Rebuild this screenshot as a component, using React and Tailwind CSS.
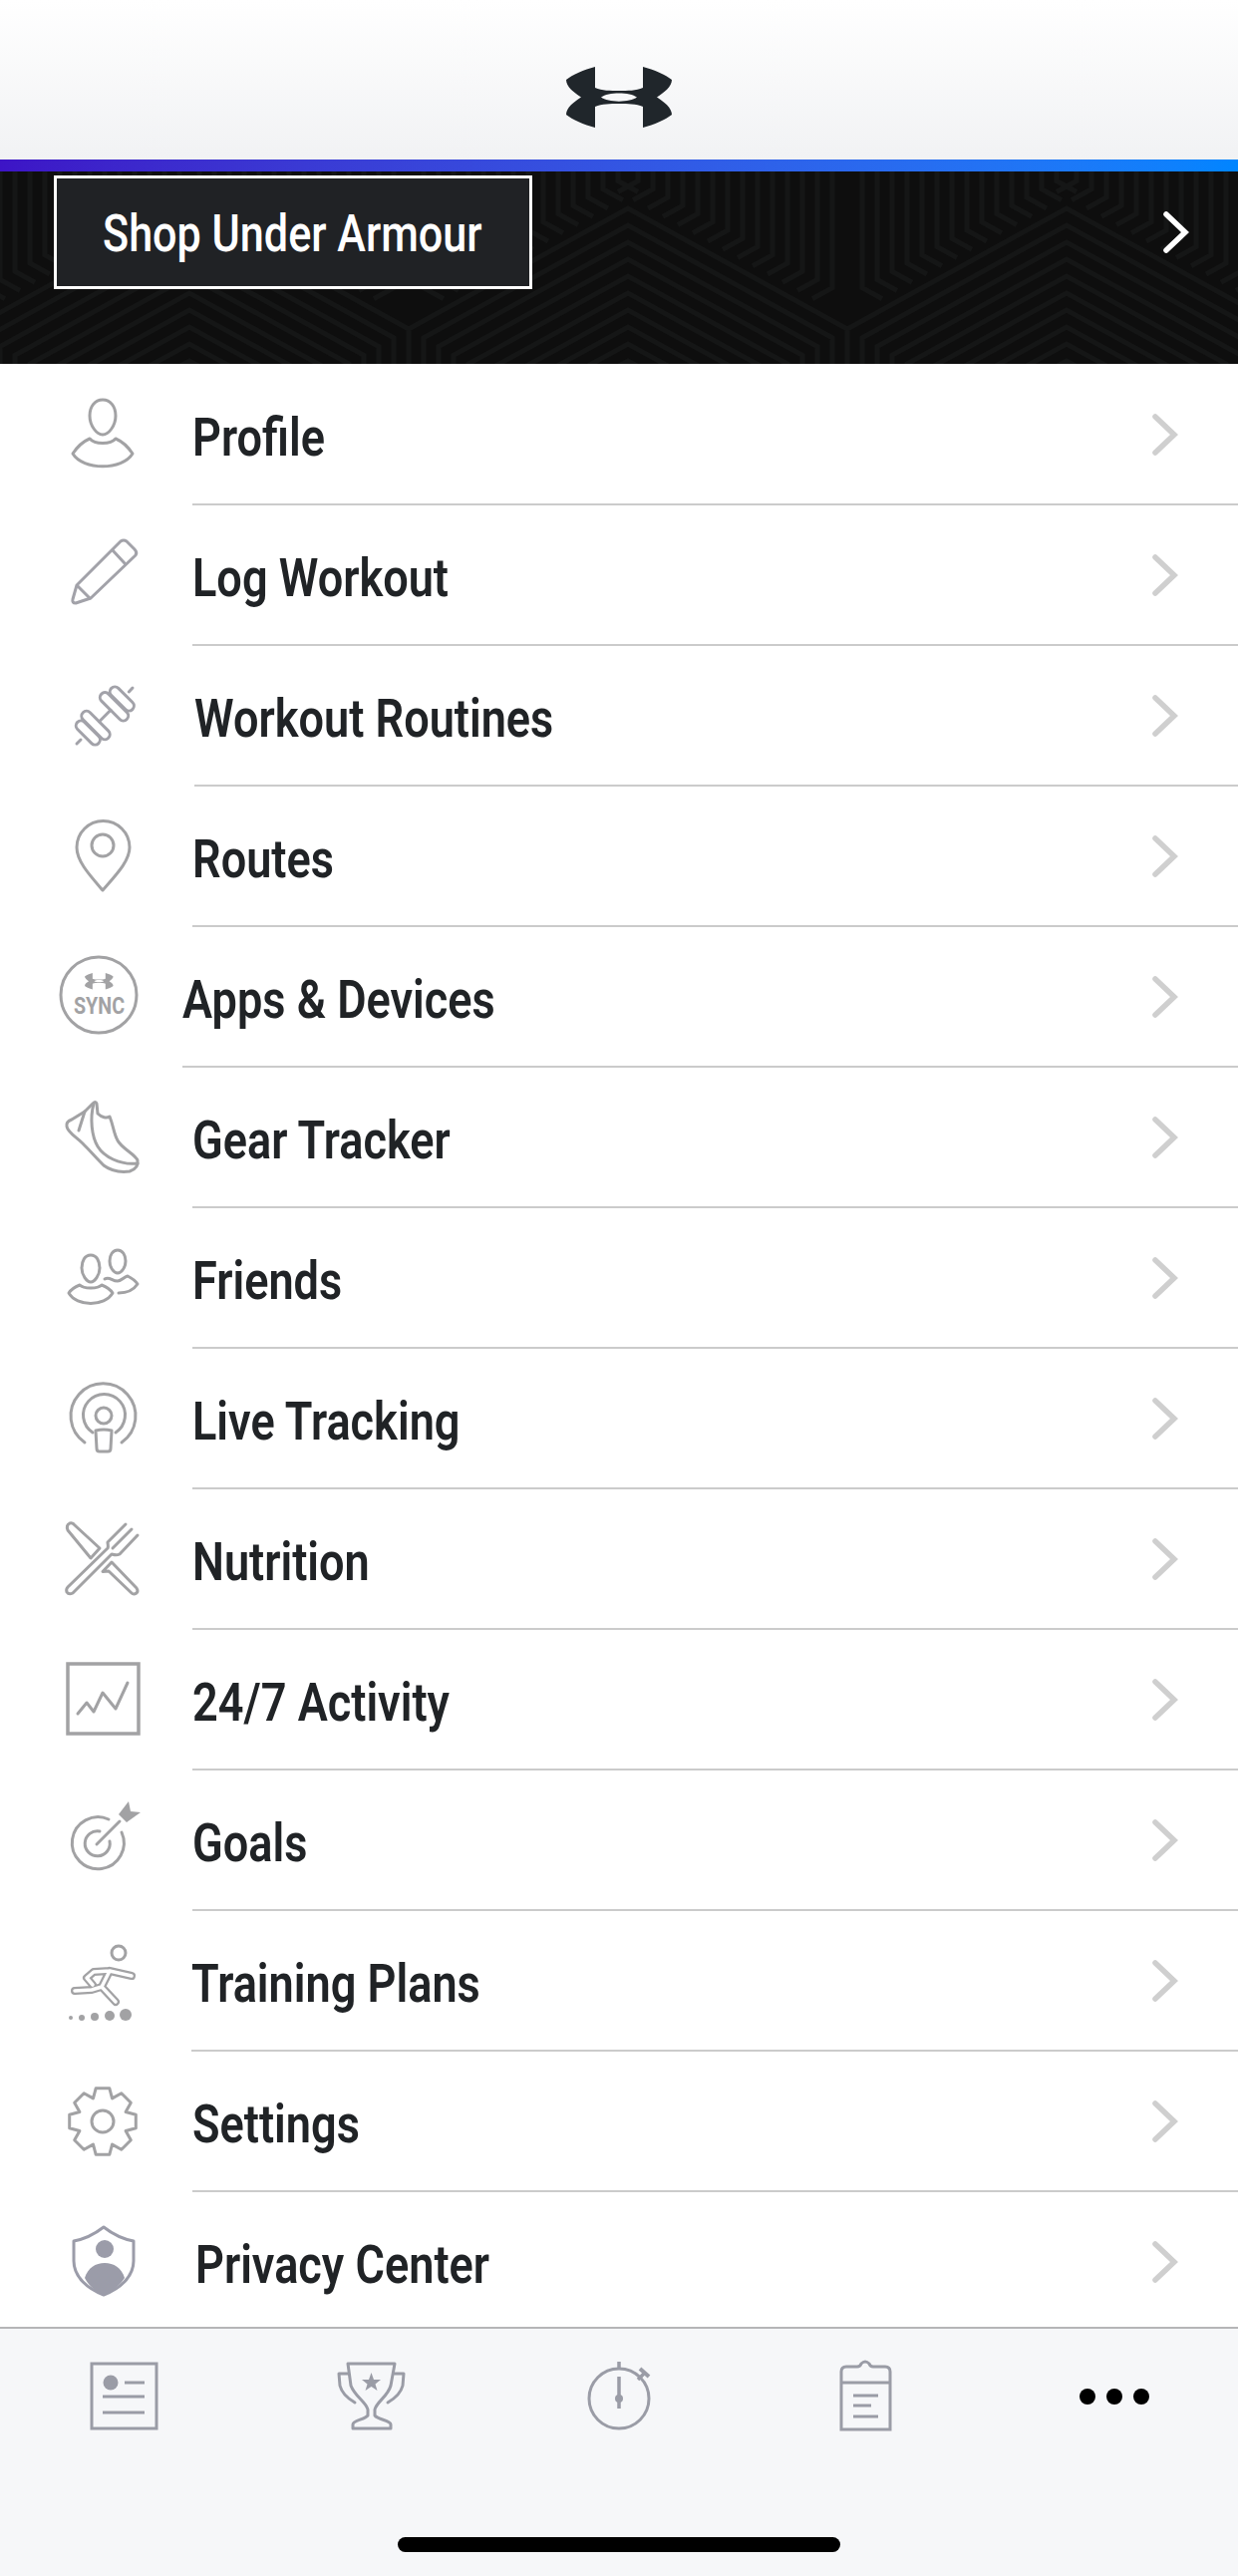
import { useMemo } from 'react';

// Under Armour mark, shared by the header and the sync badge
const UA_PATH =
  'M29 0C18 3 6 8 0 13C0 20 8 26 15 30.5C8 35 0 41 0 48C6 53 18 58 29 61L29 40C36 37 44 37 53 37C62 37 70 37 77 40L77 61C88 58 100 53 106 48C106 41 98 35 91 30.5C98 26 106 20 106 13C100 8 88 3 77 0L77 21C70 24 62 24 53 24C44 24 36 24 29 21ZM35 30.5C42 25 64 25 71 30.5C64 36 42 36 35 30.5Z';

function Glyph({ children, color = '#a2a2a4', width = 3 }) {
  return (
    <svg
      viewBox="0 0 100 100"
      className="w-[100px] h-[100px] shrink-0"
      fill="none"
      stroke={color}
      strokeWidth={width}
      strokeLinecap="round"
      strokeLinejoin="round"
    >
      {children}
    </svg>
  );
}

const ProfileIcon = () => (
  <Glyph>
    <path d="M53 16C45 16 40 23 40 32C40 42 47 51 53 51C59 51 66 42 66 32C66 23 61 16 53 16Z" />
    <path d="M40 55C45 61 61 61 66 55C73 58 79 64 83 70C73 87 33 87 23 70C27 64 33 58 40 55Z" />
  </Glyph>
);

const PencilIcon = () => (
  <Glyph color="#a2a2a9">
    <path d="M27 61L71 17Q74 15 77 17L85 25Q88 28 86 31L41 74L26 79Q22 79 23 75Z" />
    <path d="M28 62L40 74M63 26L75 39" />
  </Glyph>
);

const DumbbellIcon = () => (
  <Glyph color="#a2a2a9">
    <path d="M49.6 56.7L61 45.3M79.3 27L83 23M31 75L27 79" />
    <rect x="46.5" y="36.8" width="36" height="10" rx="5" transform="rotate(45 64.5 41.8)" />
    <rect x="57.3" y="29" width="30" height="10" rx="5" transform="rotate(45 72.3 34)" />
    <rect x="28" y="55.5" width="36" height="10" rx="5" transform="rotate(45 46 60.5)" />
    <rect x="23.3" y="63" width="30" height="10" rx="5" transform="rotate(45 38.3 68)" />
  </Glyph>
);

const PinIcon = () => (
  <Glyph>
    <path d="M53 85C40 70 27 56 27 42A26.5 26.5 0 0 1 80 42C80 56 66 70 53 85Z" />
    <circle cx="53" cy="40" r="11" />
  </Glyph>
);

const SyncIcon = () => (
  <Glyph>
    <circle cx="49" cy="49" r="38" />
    <path d={UA_PATH} transform="translate(35 27) scale(0.27)" fill="#a2a2a4" fillRule="evenodd" stroke="none" />
    <text
      x="24"
      y="68"
      textLength="51"
      lengthAdjust="spacingAndGlyphs"
      fill="#a2a2a4"
      stroke="none"
      className="font-['Roboto',sans-serif] font-bold text-[23px]"
    >
      SYNC
    </text>
  </Glyph>
);

const ShoeIcon = () => (
  <Glyph>
    <path d="M17 40Q16 35 22 33L35 25L43 17Q46 14 47 17L48 27C52 31 57 32 60 30C64 40 64 47 68 54C72 62 86 68 88 74C89 80 86 83 80 85C72 86 62 85 54 79C46 71 40 64 33 57C26 50 18 46 17 40Z" />
    <path d="M35 25L29 44M44 17C40 32 42 50 48 60C54 70 70 79 88 77" />
  </Glyph>
);

const FriendsIcon = () => (
  <Glyph>
    <path d="M41 28C35 28 32 34 32 41C32 48 37 55 41 55C45 55 50 48 50 41C50 34 47 28 41 28Z" />
    <path d="M30 58C34 62 48 62 52 58C57 60 61 63 63 66C55 80 27 80 19 66C21 63 25 60 30 58Z" />
    <path d="M68 23C63 23 60 28 60 34C60 40 64 46 68 46C72 46 76 40 76 34C76 28 73 23 68 23Z" />
    <path d="M55 52C60 49 62 54 68 54C72 54 74 50 78 49C82 51 86 54 88 57C84 63 77 66 69 66" />
  </Glyph>
);

const LiveIcon = () => (
  <Glyph>
    <circle cx="54" cy="48" r="8" />
    <path d="M43 65A21 21 0 1 1 66 65" />
    <path d="M35 75A32.5 32.5 0 1 1 72 75" />
    <path d="M46 63Q54 61 62 63L61 81Q61 84 58 84H50Q47 84 47 81Z" />
  </Glyph>
);

const NutritionIcon = () => (
  <Glyph>
    <path d="M18 22Q16 17 20 15Q23 14 25 17L50 40L41 50Z" />
    <path d="M62 54L87 80Q89 83 87 85Q84 87 82 85L59 63L53 63.5Z" />
    <path d="M58 34L76 16M63 40L82 21M88 27L70 46C66 48 63 46 62 46L23 85Q19 87 17 84Q16 81 18 79L58 40C59 38 58 36 58 34" />
  </Glyph>
);

const ActivityIcon = () => (
  <Glyph width={3.5}>
    <rect x="18" y="15" width="71" height="70" strokeLinejoin="miter" />
    <path d="M28 65L37 54L44 63L53 44L66 60L78 34" strokeWidth="3" />
  </Glyph>
);

const GoalsIcon = () => (
  <Glyph>
    <path d="M72 43A26 26 0 1 1 59 30" />
    <path d="M60 52A12.5 12.5 0 1 1 50 42" />
    <path d="M47 55L70 32" />
    <path d="M79 12L81 22L91 23L77 33L69 25Z" fill="#a2a2a4" stroke="none" />
  </Glyph>
);

const TrainingIcon = () => {
  const limbs = 'M60 41L44 42L37 48L43 55M60 41L82 46M60 41L52 57L66 72M52 57L42 60L25 61';
  return (
    <Glyph>
      <circle cx="69" cy="23" r="7" />
      <path d={limbs} strokeWidth="8" />
      <path d={limbs} strokeWidth="3.5" stroke="#fff" />
      <g fill="#a2a2a4" stroke="none">
        <circle cx="21" cy="88" r="2" />
        <circle cx="32" cy="88" r="3" />
        <circle cx="45" cy="87" r="4" />
        <circle cx="60" cy="86" r="5" />
        <circle cx="76" cy="85" r="6" />
      </g>
    </Glyph>
  );
};

const GearIcon = () => {
  // eight teeth, one pointing straight up
  const points = useMemo(() => {
    const out = [];
    for (let i = 0; i < 8; i++) {
      const a = (i * Math.PI) / 4 - Math.PI / 2;
      [
        [-0.39, 25],
        [-0.2, 34],
        [0.2, 34],
        [0.39, 25],
      ].forEach(([da, r]) => {
        out.push(`${(53 + r * Math.cos(a + da)).toFixed(1)},${(51 + r * Math.sin(a + da)).toFixed(1)}`);
      });
    }
    return out.join(' ');
  }, []);
  return (
    <Glyph>
      <polygon points={points} />
      <circle cx="53" cy="51" r="11" />
    </Glyph>
  );
};

const ShieldIcon = () => (
  <Glyph color="#9b9ca9">
    <path d="M54 16C45 23 35 28 24 30L24 50C24 66 38 78 54 84C70 78 84 66 84 50L84 30C73 28 63 23 54 16Z" />
    <circle cx="55" cy="38" r="9" fill="#9b9ca9" stroke="none" />
    <path d="M35 67C38 57 46 52 55 52C64 52 72 57 75 67C70 75 62 81 54 84C46 81 39 75 35 67Z" fill="#9b9ca9" stroke="none" />
  </Glyph>
);

const Chevron = ({ color = '#cfcfcf' }) => (
  <svg viewBox="0 0 28 44" className="w-[28px] h-[44px] shrink-0" fill="none" stroke={color} strokeWidth="5.5" strokeLinecap="round" strokeLinejoin="miter">
    <path d="M4 4L23 22L4 40" />
  </svg>
);

const items = [
  { label: 'Profile', icon: ProfileIcon, slot: 'w-[193px]' },
  { label: 'Log Workout', icon: PencilIcon, slot: 'w-[193px]' },
  { label: 'Workout Routines', icon: DumbbellIcon, slot: 'w-[195px]' },
  { label: 'Routes', icon: PinIcon, slot: 'w-[193px]' },
  { label: 'Apps & Devices', icon: SyncIcon, slot: 'w-[183px]' },
  { label: 'Gear Tracker', icon: ShoeIcon, slot: 'w-[193px]' },
  { label: 'Friends', icon: FriendsIcon, slot: 'w-[193px]' },
  { label: 'Live Tracking', icon: LiveIcon, slot: 'w-[193px]' },
  { label: 'Nutrition', icon: NutritionIcon, slot: 'w-[193px]' },
  { label: '24/7 Activity', icon: ActivityIcon, slot: 'w-[193px]' },
  { label: 'Goals', icon: GoalsIcon, slot: 'w-[193px]' },
  { label: 'Training Plans', icon: TrainingIcon, slot: 'w-[192px]' },
  { label: 'Settings', icon: GearIcon, slot: 'w-[193px]' },
  { label: 'Privacy Center', icon: ShieldIcon, slot: 'w-[196px]' },
];

// Faint chevron/hex weave behind the shop banner
function bannerPattern() {
  const slope = 0.55;
  const top = 37;
  const parts = [];
  [190, 630, 1070].forEach((peak) => {
    for (let k = 0; k < 10; k++) {
      const dx = 220 - 15 * k;
      const y = top + 17 * k;
      const yEnd = y + dx * slope;
      parts.push(`M${peak - dx} 200V${yEnd}L${peak} ${y}L${peak + dx} ${yEnd}V200`);
    }
  });
  [-30, 410, 850, 1290].forEach((valley) => {
    for (let j = 1; j < 15; j++) {
      [-1, 1].forEach((side) => {
        const x = valley + side * 15 * j;
        const endY = top + (200 - 15 * j) * slope - 11;
        parts.push(`M${x} 0V${endY - 11}L${x + side * 20} ${endY}`);
      });
    }
  });
  return parts.join('');
}

function NavIcon({ children }) {
  return (
    <div className="flex items-center justify-center">
      <Glyph color="#9a9ca6" width={3}>
        {children}
      </Glyph>
    </div>
  );
}

export default function App() {
  return (
    <div className="w-[1242px] h-[2584px] flex flex-col bg-white overflow-hidden font-['Roboto',sans-serif]">
      {/* Header */}
      <header className="h-[160px] flex items-center justify-center bg-gradient-to-b from-white to-[#f1f2f4] pt-[35px] shrink-0">
        <svg viewBox="0 0 106 61" className="w-[106px] h-[61px]" fill="#20262b" fillRule="evenodd">
          <path d={UA_PATH} />
        </svg>
      </header>
      <div className="h-[12px] shrink-0 bg-gradient-to-r from-[#3d14c6] to-[#0085ff]" />

      {/* Shop banner */}
      <div className="relative h-[193px] shrink-0 bg-[#0e0e0e] pl-[54px] pr-[48px] pt-[4px] flex items-start justify-between overflow-hidden">
        <svg className="absolute inset-0 w-full h-full" viewBox="0 0 1242 193" fill="none" stroke="#151616" strokeWidth="5">
          <path d={bannerPattern()} />
        </svg>
        <div className="relative w-[480px] h-[114px] border-[3px] border-white bg-[#202225] flex items-center pl-[46px]">
          <span className="text-white text-[52px] leading-none font-medium pt-[3px] whitespace-nowrap origin-left scale-x-[0.83]">Shop Under Armour</span>
        </div>
        <div className="relative mt-[35px]">
          <Chevron color="#ffffff" />
        </div>
      </div>

      {/* Menu list */}
      <div className="flex-1 min-h-0 overflow-hidden pt-px">
        {items.map((item) => {
          const Icon = item.icon;
          return (
            <div key={item.label} className="flex h-[141px]">
              <div className={`${item.slot} shrink-0 pl-[50px] pb-[3px] flex items-center`}>
                <Icon />
              </div>
              <div className="flex-1 flex items-center justify-between border-b-2 border-[#cbcbcb] pr-[59px]">
                <span className="text-[54px] leading-none font-semibold pt-[6px] text-[#202326] whitespace-nowrap origin-left scale-x-[0.835]">
                  {item.label}
                </span>
                <Chevron />
              </div>
            </div>
          );
        })}
      </div>

      {/* Tab bar */}
      <nav className="h-[250px] shrink-0 bg-[#f6f7f9] border-t-2 border-[#b5b5b7] flex flex-col">
        <div className="grid grid-cols-5 pt-[18px]">
          <NavIcon>
            <rect x="18" y="17" width="65" height="65" strokeLinejoin="miter" />
            <circle cx="37" cy="36" r="7.5" fill="#9a9ca6" stroke="none" />
            <path d="M51 36H71M29 50H71M29 66H71" strokeLinecap="butt" />
          </NavIcon>
          <NavIcon>
            <path d="M26 17H73L69 39C66 50 55 55 53 63V69C56 73 69 74 69 78V82H31V78C31 74 43 73 46 69V63C44 55 33 50 29 39Z" />
            <path d="M26 27H17L18 39C20 47 26 52 33 56M73 27H82L81 39C79 47 73 52 66 56" />
            <path d="M49.5 26L52 33H59L53.5 37.5L55.5 44L49.5 40L43.5 44L45.5 37.5L40 33H47Z" fill="#9a9ca6" stroke="none" />
          </NavIcon>
          <NavIcon>
            <circle cx="50" cy="52" r="30" />
            <path d="M50 15V22M50 30V62M69 33L76 26" strokeWidth="3.5" strokeLinecap="butt" />
            <path d="M71 22L80 30" strokeWidth="4" strokeLinecap="butt" />
            <circle cx="50" cy="52" r="4" fill="#9a9ca6" stroke="none" />
          </NavIcon>
          <NavIcon>
            <path d="M25 83V25Q25 20 30 20H41Q44 20 45 17Q49 13 53 17Q54 20 57 20H69Q74 20 74 25V83Z" strokeLinejoin="miter" />
            <path d="M25 36H74M37 49H62M37 59H55M37 70H62" strokeLinecap="butt" />
          </NavIcon>
          <div className="flex items-center justify-center gap-[11px]">
            <div className="w-4 h-4 rounded-full bg-black" />
            <div className="w-4 h-4 rounded-full bg-black" />
            <div className="w-4 h-4 rounded-full bg-black" />
          </div>
        </div>
        <div className="mt-auto mb-[24px] mx-auto w-[444px] h-[15px] rounded-full bg-black" />
      </nav>
    </div>
  );
}
